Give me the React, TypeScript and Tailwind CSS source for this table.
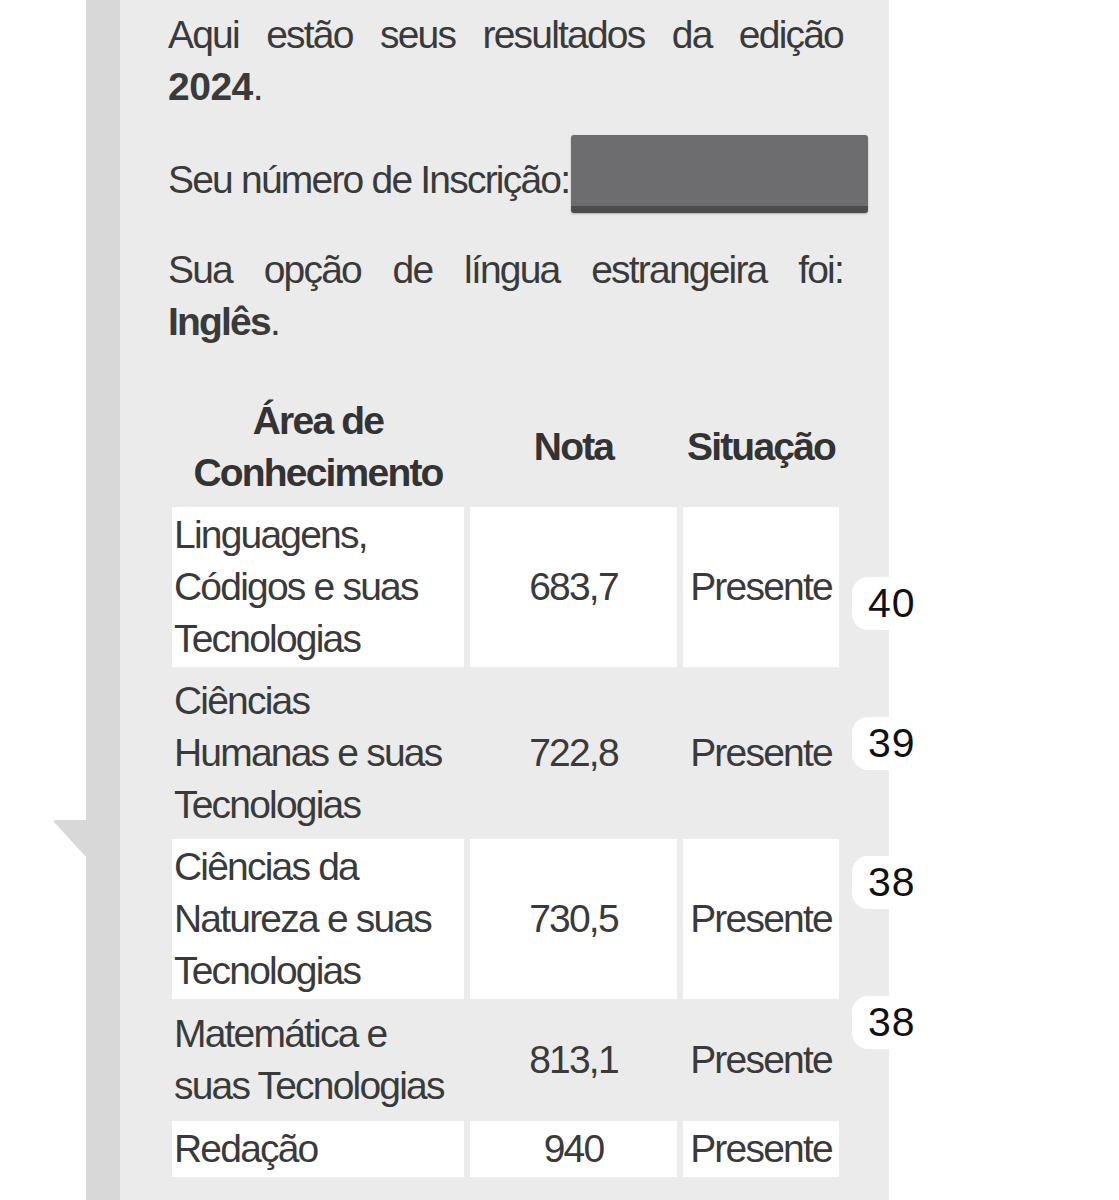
import React from "react";

const rows = [
  { area: ["Linguagens,", "Códigos e suas", "Tecnologias"], nota: "683,7", white: true },
  { area: ["Ciências", "Humanas e suas", "Tecnologias"], nota: "722,8", white: false },
  { area: ["Ciências da", "Natureza e suas", "Tecnologias"], nota: "730,5", white: true },
  { area: ["Matemática e", "suas Tecnologias"], nota: "813,1", white: false },
  { area: ["Redação"], nota: "940", white: true },
];

const badges = [
  { v: "40", top: "top-[577px]" },
  { v: "39", top: "top-[717px]" },
  { v: "38", top: "top-[856px]" },
  { v: "38", top: "top-[996px]" },
];

export default function App() {
  return (
    <div className="relative w-[1119px] h-[1200px] bg-white overflow-hidden font-['Liberation_Sans',Arial,sans-serif] text-[#3a3a3a]">
      <div className="flex h-full">
        <div className="w-[86px] shrink-0" />
        <div className="w-[34px] shrink-0 bg-[#d8d8d8]" />
        <div className="w-[769px] shrink-0 bg-[#ebebeb] pl-[48px] pr-[46px] pt-[9px] text-[39px] leading-[52px] tracking-[-1.8px]">
          <p>
            <span className="block text-justify [text-align-last:justify]">Aqui estão seus resultados da edição</span>
            <span className="block">
              <b className="tracking-[-0.5px]">2024</b>.
            </span>
          </p>
          <p className="mt-[41px]">Seu número de Inscrição:</p>
          <p className="mt-[38px]">
            <span className="block text-justify [text-align-last:justify]">Sua opção de língua estrangeira foi:</span>
            <span className="block">
              <b>Inglês</b>.
            </span>
          </p>
          <table className="mt-[39px] ml-[-2px] w-[679px] table-fixed border-separate border-spacing-[6px]">
            <colgroup>
              <col className="w-[292px]" />
              <col className="w-[207px]" />
              <col className="w-[156px]" />
            </colgroup>
            <thead>
              <tr>
                <th className="p-[2px] font-bold text-center text-[#333]">
                  Área de
                  <br />
                  Conhecimento
                </th>
                <th className="p-[2px] font-bold text-center text-[#333]">Nota</th>
                <th className="p-[2px] font-bold text-center text-[#333]">Situação</th>
              </tr>
            </thead>
            <tbody>
              {rows.map((r, i) => {
                const pad = r.area.length === 2 ? "py-[3px] px-[2px]" : "p-[2px]";
                const bg = r.white ? "bg-white" : "";
                return (
                  <tr key={i}>
                    <td className={`${pad} text-left align-middle ${bg}`}>
                      {r.area.map((l, j) => (
                        <span key={j} className="block whitespace-nowrap">
                          {l}
                        </span>
                      ))}
                    </td>
                    <td className={`${pad} text-center align-middle ${bg}`}>{r.nota}</td>
                    <td className={`${pad} text-center align-middle ${bg}`}>Presente</td>
                  </tr>
                );
              })}
            </tbody>
          </table>
        </div>
      </div>

      {/* bubble tail */}
      <svg className="absolute left-[53px] top-[819px]" width="34" height="40" viewBox="0 0 34 40">
        <path d="M2 1 L34 1 L34 39 L1 3 Q0 1 2 1 Z" fill="#d8d8d8" />
      </svg>

      {/* redaction box */}
      <div className="absolute left-[571px] top-[135px] w-[297px] h-[78px] rounded-[3px] bg-[#6d6d6f] border-b-[7px] border-[#4d4d50] shadow-[0_1px_2px_rgba(0,0,0,0.25)]" />

      {/* score annotations */}
      {badges.map((b, i) => (
        <div
          key={i}
          className={`absolute left-[852px] ${b.top} w-[74px] h-[53px] rounded-[16px] bg-white flex items-center pl-[16px] text-[41px] tracking-[1px] leading-none text-[#111]`}
        >
          {b.v}
        </div>
      ))}
    </div>
  );
}
